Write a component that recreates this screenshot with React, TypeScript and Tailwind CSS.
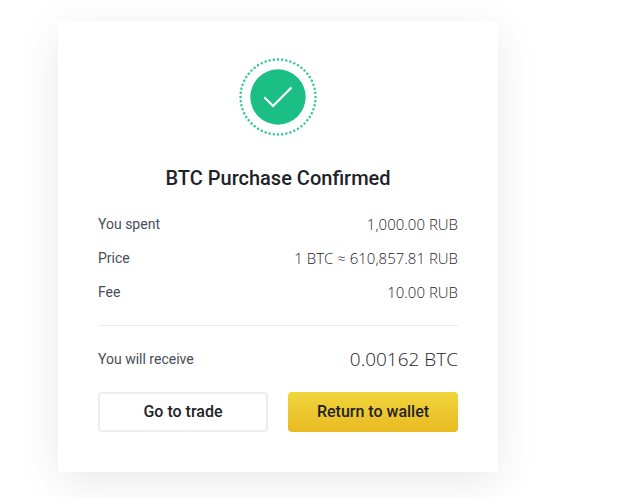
import React from "react";

type Detail = { label: string; value: string };

const details: Detail[] = [
  { label: "You spent", value: "1,000.00 RUB" },
  { label: "Price", value: "1 BTC ≈ 610,857.81 RUB" },
  { label: "Fee", value: "10.00 RUB" },
];

function SuccessIcon() {
  return (
    <svg viewBox="0 0 78 78" className="mx-auto block size-[78px]" fill="none" aria-hidden="true">
      <circle
        cx="39"
        cy="39"
        r="37.5"
        stroke="#2fc795"
        strokeWidth="2.5"
        strokeLinecap="round"
        strokeDasharray="0 1"
        pathLength="56"
      />
      <circle cx="39" cy="39" r="27.7" fill="#1bbf86" />
      <path d="M25.3 39.3L34 48L52.5 29.5" stroke="#fff" strokeWidth="2.2" />
    </svg>
  );
}

export default function App() {
  return (
    <main className="min-h-screen bg-white px-[58px] pt-[21px] font-['Roboto',sans-serif] text-[#1e2329]">
      <section className="max-w-[440px] bg-white px-10 pt-[37px] pb-10 shadow-[0_10px_40px_rgba(0,0,0,0.09)]">
        <SuccessIcon />
        <h1 className="mt-7 text-center text-xl leading-7 font-medium">BTC Purchase Confirmed</h1>
        <dl className="mt-[22px] grid gap-[14px] border-b border-[#eaecef] pb-[23px]">
          {details.map((item) => (
            <div key={item.label} className="flex items-center justify-between leading-5">
              <dt className="text-sm leading-5 text-[#474d57]">{item.label}</dt>
              <dd className="font-['Open_Sans',sans-serif] text-[15px] leading-5 font-[350]">{item.value}</dd>
            </div>
          ))}
        </dl>
        <dl className="flex items-center justify-between pt-[19px]">
          <dt className="text-sm text-[#474d57]">You will receive</dt>
          <dd className="font-['Open_Sans',sans-serif] text-[19px] leading-7 font-[350]">0.00162 BTC</dd>
        </dl>
        <div className="mt-[19px] grid grid-cols-2 gap-5">
          <button type="button" className="h-10 rounded border-2 border-[#eaecef] bg-white font-medium">
            Go to trade
          </button>
          <button type="button" className="h-10 rounded bg-linear-to-b from-[#f0d53b] to-[#e9ba22] font-medium">
            Return to wallet
          </button>
        </div>
      </section>
    </main>
  );
}
